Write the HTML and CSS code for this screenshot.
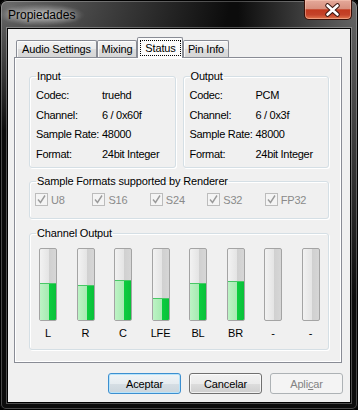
FILE: index.html
```html
<!DOCTYPE html>
<html lang="es">
<head>
    <meta charset="UTF-8">
    <meta name="viewport" content="width=device-width, initial-scale=1.0">
    <title>Propiedades</title>
    <link rel="stylesheet" href="styles.css">
</head>
<body>
    <div class="window">
        <div class="titlebar">
            <span class="title">Propiedades</span>
            <div class="close">
                <svg width="48" height="20" viewBox="0 0 48 20">
                    <path d="M23.5 5.5 L33.5 14.5 M33.5 5.5 L23.5 14.5" stroke="#3b1610" stroke-width="4.6" stroke-linecap="round"/>
                    <path d="M23.5 5.5 L33.5 14.5 M33.5 5.5 L23.5 14.5" stroke="#ffffff" stroke-width="2.6" stroke-linecap="round"/>
                </svg>
            </div>
        </div>
        <div class="client">
            <div class="tabs">
                <div class="tab tab-audio">Audio Settings</div>
                <div class="tab tab-mixing">Mixing</div>
                <div class="tab active"><span class="focus">Status</span></div>
                <div class="tab tab-pin">Pin Info</div>
            </div>
            <div class="panel">
                <div class="streams">
                    <fieldset class="group stream">
                        <legend>Input</legend>
                        <div class="info">
                            <span>Codec:</span><span>truehd</span>
                            <span>Channel:</span><span>6 / 0x60f</span>
                            <span>Sample Rate:</span><span>48000</span>
                            <span>Format:</span><span>24bit Integer</span>
                        </div>
                    </fieldset>
                    <fieldset class="group stream">
                        <legend>Output</legend>
                        <div class="info">
                            <span>Codec:</span><span>PCM</span>
                            <span>Channel:</span><span>6 / 0x3f</span>
                            <span>Sample Rate:</span><span>48000</span>
                            <span>Format:</span><span>24bit Integer</span>
                        </div>
                    </fieldset>
                </div>
                <fieldset class="group formats">
                    <legend>Sample Formats supported by Renderer</legend>
                    <div class="checks">
                        <div class="check"><span class="box"><svg width="11" height="11" viewBox="0 0 11 11"><path d="M2 5.5 L4.5 8.5 L9 1.5" fill="none" stroke="#9a9a9a" stroke-width="1.4"/></svg></span>U8</div>
                        <div class="check"><span class="box"><svg width="11" height="11" viewBox="0 0 11 11"><path d="M2 5.5 L4.5 8.5 L9 1.5" fill="none" stroke="#9a9a9a" stroke-width="1.4"/></svg></span>S16</div>
                        <div class="check"><span class="box"><svg width="11" height="11" viewBox="0 0 11 11"><path d="M2 5.5 L4.5 8.5 L9 1.5" fill="none" stroke="#9a9a9a" stroke-width="1.4"/></svg></span>S24</div>
                        <div class="check"><span class="box"><svg width="11" height="11" viewBox="0 0 11 11"><path d="M2 5.5 L4.5 8.5 L9 1.5" fill="none" stroke="#9a9a9a" stroke-width="1.4"/></svg></span>S32</div>
                        <div class="check"><span class="box"><svg width="11" height="11" viewBox="0 0 11 11"><path d="M2 5.5 L4.5 8.5 L9 1.5" fill="none" stroke="#9a9a9a" stroke-width="1.4"/></svg></span>FP32</div>
                    </div>
                </fieldset>
                <fieldset class="group channels">
                    <legend>Channel Output</legend>
                    <div class="meters">
                        <div class="chan"><div class="meter"><div class="level" style="height:37px"></div></div><span>L</span></div>
                        <div class="chan"><div class="meter"><div class="level" style="height:35px"></div></div><span>R</span></div>
                        <div class="chan"><div class="meter"><div class="level" style="height:40px"></div></div><span>C</span></div>
                        <div class="chan"><div class="meter"><div class="level" style="height:22px"></div></div><span>LFE</span></div>
                        <div class="chan"><div class="meter"><div class="level" style="height:37px"></div></div><span>BL</span></div>
                        <div class="chan"><div class="meter"><div class="level" style="height:39px"></div></div><span>BR</span></div>
                        <div class="chan"><div class="meter"></div><span>-</span></div>
                        <div class="chan"><div class="meter"></div><span>-</span></div>
                    </div>
                </fieldset>
            </div>
            <div class="buttons">
                <button class="btn default">Aceptar</button>
                <button class="btn">Cancelar</button>
                <button class="btn" disabled>Apli<u>c</u>ar</button>
            </div>
        </div>
    </div>
</body>
</html>
```

FILE: styles.css
```css
*{
    margin: 0;
    padding: 0;
    box-sizing: border-box;
}
html,body{
    width: 100%;
    height: 100%;
    background-color: #000;
}
body{
    font-family: "Liberation Sans", Arial, sans-serif;
    font-size: 11px;
    letter-spacing: -0.15px;
    color: #000;
}
.window{
    display: flex;
    flex-direction: column;
    width: 358px;
    height: 410px;
    padding: 0 7px 7px;
    border-radius: 7px 7px 6px 6px;
    background:
        radial-gradient(ellipse 230px 130px at 0 0, #6c6c6c 0%, rgba(108,108,108,0) 100%),
        radial-gradient(ellipse 120px 300px at 100% 0, #686868 0%, rgba(104,104,104,0) 100%),
        #0c0c0c;
    box-shadow: inset 0 0 0 1px #000, inset 0 0 0 2px rgba(255,255,255,0.25);
}
.titlebar{
    display: flex;
    align-items: flex-start;
    height: 28px;
}
.title{
    margin: 4px 0 0 -9px;
    padding: 4px 10px;
    font-size: 12px;
    line-height: 14px;
    letter-spacing: 0;
    background: radial-gradient(closest-side, rgba(255,255,255,0.5), rgba(255,255,255,0));
    text-shadow: 0 0 6px rgba(255,255,255,0.8);
}
.close{
    margin-left: auto;
    margin-right: -1px;
    width: 48px;
    height: 20px;
    border: 1px solid #3a1008;
    border-top: 0;
    border-radius: 0 0 5px 5px;
    background: linear-gradient(#e4a99a 0%, #d8907e 45%, #c23a1f 52%, #c4432a 78%, #e2774e 100%);
    box-shadow: inset 0 0 0 1px rgba(255,210,190,0.45);
}
.close svg{
    display: block;
    margin-left: -1px;
}
.client{
    flex: 1;
    display: flex;
    flex-direction: column;
    padding: 8px 7px 8px 6px;
    background-color: #f0f0f0;
    border: 1px solid #000;
    box-shadow: 0 0 0 1px rgba(255,255,255,0.28);
}
.tabs{
    display: flex;
    align-items: flex-end;
    height: 20px;
    padding-left: 2px;
}
.tab{
    height: 17px;
    line-height: 16px;
    text-align: center;
    white-space: nowrap;
    border: 1px solid #898c95;
    border-bottom: 0;
    border-radius: 2px 2px 0 0;
    background: linear-gradient(#f3f3f3 0%, #ebebeb 50%, #dddddd 51%, #d6d6d6 100%);
    box-shadow: inset 1px 1px 0 rgba(255,255,255,0.8);
}
.tab-audio{
    width: 81px;
}
.tab-mixing{
    width: 40px;
}
.tab-pin{
    width: 46px;
}
.tab.active{
    position: relative;
    z-index: 1;
    width: 46px;
    height: 21px;
    margin-bottom: -1px;
    padding: 2px 1px 0 2px;
    background: #fcfcfc;
    box-shadow: none;
}
.focus{
    display: block;
    line-height: 14px;
    border: 1px dotted #000;
}
.panel{
    display: flex;
    flex-direction: column;
    margin-right: 1px;
    padding: 12px 12px 12px 14px;
    border: 1px solid #898c95;
    background-color: #f0f0f0;
    box-shadow: inset 1px 1px 0 #fff, inset -1px -1px 0 #fff;
}
.streams{
    display: flex;
    gap: 7px;
}
.group{
    min-width: 0;
    padding: 0 6px 3px;
    border: 1px solid #d5dfe5;
    border-radius: 3px;
    box-shadow: inset 1px 1px 0 #fff, 1px 1px 0 #fff;
}
.group legend{
    padding: 0 1px;
    line-height: 13px;
}
.stream{
    flex: 1;
}
.info{
    display: grid;
    grid-template-columns: 66px 1fr;
    grid-auto-rows: 19.75px;
    align-items: center;
    padding-top: 2px;
    white-space: nowrap;
    letter-spacing: -0.3px;
}
.formats{
    margin-top: 7px;
    padding-bottom: 12px;
}
.checks{
    display: flex;
    margin: 5px 0 0 -1px;
}
.check{
    display: flex;
    align-items: center;
    gap: 3px;
    width: 57.75px;
    height: 13px;
    color: #8a8a8a;
}
.box{
    display: flex;
    align-items: center;
    justify-content: center;
    width: 13px;
    height: 13px;
    border: 1px solid #bcbcbc;
    background-color: #f4f4f4;
}
.channels{
    margin-top: 8px;
    padding-bottom: 9px;
}
.meters{
    display: flex;
    gap: 19.5px;
    margin: 8px 0 0 3px;
}
.chan{
    display: flex;
    flex-direction: column;
    align-items: center;
    width: 18px;
}
.chan span{
    margin-top: 6px;
    line-height: 13px;
    white-space: nowrap;
}
.meter{
    display: flex;
    align-items: flex-end;
    overflow: hidden;
    width: 18px;
    height: 73px;
    border: 1px solid #a4a4a4;
    border-radius: 2px;
    background: linear-gradient(to right, #f2f2f2 0, #e4e4e4 56%, #d0d0d0 57%, #d6d6d6 100%);
}
.level{
    width: 100%;
    border-top: 1px solid #48c866;
    background: linear-gradient(to right, #bdf3c5 0, #a6eab1 56%, #0ccd3f 57%, #0ac03a 100%);
}
.buttons{
    display: flex;
    justify-content: flex-end;
    gap: 8px;
    margin-top: 10px;
}
.btn{
    width: 73px;
    height: 21px;
    font-family: "Liberation Sans", Arial, sans-serif;
    font-size: 11px;
    letter-spacing: -0.15px;
    color: #000;
    border: 1px solid #707070;
    border-radius: 3px;
    background: linear-gradient(#f2f2f2 0%, #ebebeb 50%, #dddddd 51%, #cfcfcf 100%);
    box-shadow: inset 0 0 0 1px rgba(255,255,255,0.7);
}
.btn.default{
    border-color: #3c8fd0;
    background: linear-gradient(#f0f4f7 0%, #e6ecf0 50%, #d6dee4 51%, #cbd5dc 100%);
    box-shadow: inset 0 0 0 1px #b8e4fb;
}
.btn:disabled{
    color: #838383;
    border-color: #adb2b5;
    background: #f4f4f4;
    box-shadow: none;
}
```
